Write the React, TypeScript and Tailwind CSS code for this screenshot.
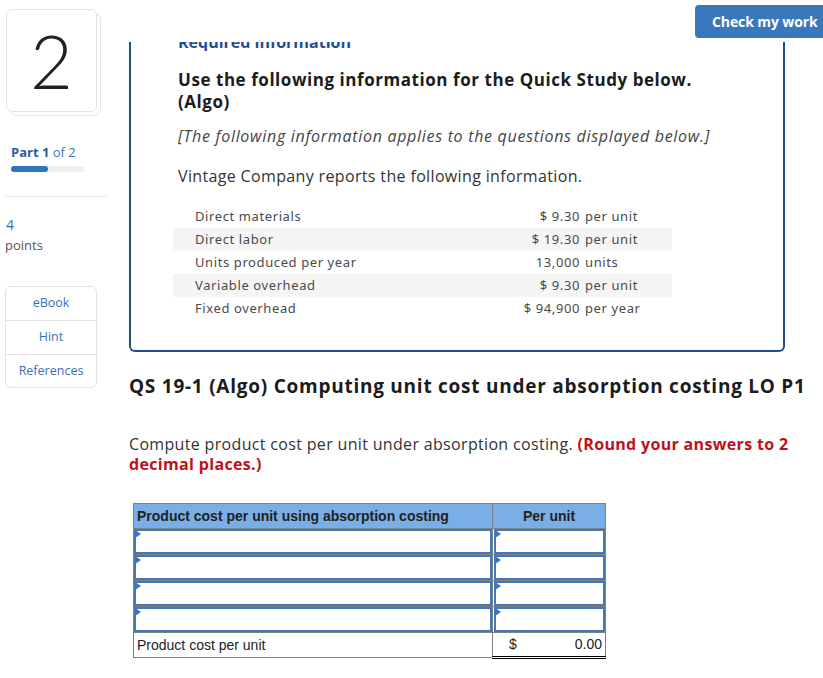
const info = [
  { label: "Direct materials", value: "$ 9.30", unit: "per unit" },
  { label: "Direct labor", value: "$ 19.30", unit: "per unit" },
  { label: "Units produced per year", value: "13,000", unit: "units" },
  { label: "Variable overhead", value: "$ 9.30", unit: "per unit" },
  { label: "Fixed overhead", value: "$ 94,900", unit: "per year" },
];

function InputCell() {
  return (
    <div className="relative h-[25px] border-2 border-[#4577b8] bg-white">
      <div className="absolute left-[-1px] top-[-1px] h-0 w-0 border-y-[4px] border-l-[6px] border-y-transparent border-l-[#3f74b8]" />
    </div>
  );
}

function Sidebar() {
  return (
    <div className="w-[107px] shrink-0 pt-[9px] font-['Open_Sans',sans-serif]">
      {/* question number card */}
      <div className="relative ml-[6px] h-[107px] w-[95px]">
        <div className="absolute left-[4px] top-[4px] h-[103px] w-[91px] rounded-md border border-[#e6e6e6] bg-white" />
        <div className="absolute left-0 top-0 flex h-[103px] w-[91px] items-center justify-center rounded-md border border-[#e3e3e3] bg-white">
          <span className="font-['Lato',sans-serif] text-[74px] font-light leading-none text-[#222]">2</span>
        </div>
      </div>

      <div className="ml-[11px] mt-[28px] text-[13px] leading-[16px] text-[#3b78c2]">
        <span className="font-bold text-[#2e5c96]">Part 1</span> of 2
      </div>
      <div className="ml-[11px] mt-[6px] h-[6px] w-[74px] rounded-full bg-[#f0f0f0]">
        <div className="h-[6px] w-[37px] rounded-full bg-[#2f74bf]" />
      </div>

      <div className="ml-[5px] mt-[24px] h-px bg-[#e8e8e8]" />

      <div className="ml-[6px] mt-[20px] text-[14px] leading-[16px] text-[#2f6eb5]">4</div>
      <div className="ml-[5px] mt-[4px] text-[13px] leading-[16px] text-[#555]">points</div>

      <div className="ml-[5px] mt-[33px] w-[92px] rounded-md border border-[#e2e2e2] text-[12.5px] text-[#3a6fb3]">
        <div className="flex h-[33px] items-center justify-center">eBook</div>
        <div className="flex h-[34px] items-center justify-center border-t border-[#e2e2e2]">Hint</div>
        <div className="flex h-[33px] items-center justify-center border-t border-[#e2e2e2]">References</div>
      </div>
    </div>
  );
}

export default function App() {
  return (
    <div className="flex h-[678px] w-[823px] overflow-hidden bg-white font-['Open_Sans',sans-serif] text-[#333]">
      <Sidebar />

      <div className="ml-[22px] w-[700px] shrink-0">
        {/* top bar */}
        <div className="flex h-[42px] justify-end">
          <button className="relative mr-[-8px] mt-[5px] h-[33px] w-[142px] shrink-0 rounded bg-[#3a78bd] pl-[17px] text-left text-[14px] font-bold tracking-[-0.1px] text-white">
            Check my work
            <span className="absolute right-[6px] top-[-2px] h-[6px] w-[6px] rounded-full bg-[#1f4f8f]" />
          </button>
        </div>

        {/* required information panel */}
        <div className="w-[656px] rounded-b-md border-x-2 border-b-2 border-[#1f4f8f] pb-[30px]">
          <div className="h-[9px] overflow-hidden pl-[47px]">
            <div className="mt-[-10px] text-[16px] font-bold leading-[20px] text-[#1f4f8f]">Required information</div>
          </div>
          <div className="pl-[47px] pr-[20px]">
            <h2 className="mt-[18px] text-[17px] font-bold leading-[22px] tracking-[0.55px] text-[#1c1c1c]">
              Use the following information for the Quick Study below.
              <br />
              (Algo)
            </h2>
            <p className="mt-[12px] text-[16px] italic leading-[22px] tracking-[0.7px] text-[#444]">
              [The following information applies to the questions displayed below.]
            </p>
            <p className="mt-[18px] text-[16px] leading-[22px] tracking-[0.35px] text-[#333]">
              Vintage Company reports the following information.
            </p>
          </div>

          <div className="ml-[42px] mt-[18px] w-[499px] font-['Noto_Sans',sans-serif] text-[13px] tracking-[0.6px] text-[#4a4a4a]">
            {info.map((r, i) => (
              <div key={r.label} className={`flex h-[23px] items-center ${i % 2 === 1 ? "bg-[#f5f5f5]" : ""}`}>
                <div className="w-[335px] pl-[22px]">{r.label}</div>
                <div className="w-[72px] text-right">{r.value}</div>
                <div className="pl-[5px]">{r.unit}</div>
              </div>
            ))}
          </div>
        </div>

        <h1 className="mt-[21px] text-[19px] font-bold leading-[26px] tracking-[0.75px] text-[#1c1c1c]">
          QS 19-1 (Algo) Computing unit cost under absorption costing LO P1
        </h1>

        <p className="mt-[35px] w-[680px] text-[16px] leading-[20px] tracking-[0.33px] text-[#333]">
          Compute product cost per unit under absorption costing.{" "}
          <span className="font-bold text-[#c0101a]">(Round your answers to 2 decimal places.)</span>
        </p>

        {/* answer table */}
        <table className="ml-[4px] mt-[29px] w-[473px] border-collapse border border-[#808080] font-['Liberation_Sans',sans-serif] text-[14px] text-[#222]">
          <thead>
            <tr className="h-[25px] bg-[#7aaee6]">
              <th className="w-[359px] border border-[#808080] pl-[3px] text-left font-bold">
                Product cost per unit using absorption costing
              </th>
              <th className="border border-[#808080] text-center font-bold">Per unit</th>
            </tr>
          </thead>
          <tbody>
            {[0, 1, 2, 3].map((i) => (
              <tr key={i}>
                <td className="border border-[#808080] p-0">
                  <InputCell />
                </td>
                <td className="border border-[#808080] p-0 pl-[1px]">
                  <InputCell />
                </td>
              </tr>
            ))}
            <tr className="h-[25px]">
              <td className="border border-[#808080] pl-[3px]">Product cost per unit</td>
              <td className="border-x border-[#808080] border-b-[3px] border-b-black border-double p-0">
                <div className="flex items-center justify-between pl-[16px] pr-[3px]">
                  <span>$</span>
                  <span>0.00</span>
                </div>
              </td>
            </tr>
          </tbody>
        </table>
      </div>
    </div>
  );
}
